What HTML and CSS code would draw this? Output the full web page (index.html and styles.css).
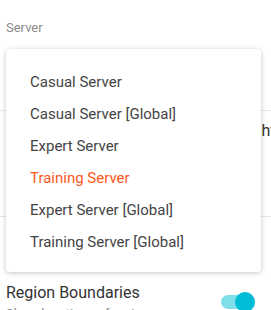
FILE: index.html
```html
<!DOCTYPE html>
<html lang="en">
<head>
    <meta charset="UTF-8">
    <meta name="viewport" content="width=device-width, initial-scale=1.0">
    <title>Server</title>
    <link rel="stylesheet" href="styles.css">
</head>
<body>
    <div class="page">
        <!-- Campo do servidor -->
        <div class="field">
            <div class="field-label">Server</div>
        </div>

        <div class="setting">
            <span class="setting-hidden">Daylight</span>
        </div>

        <div class="setting-row">
            <div class="setting-text">
                <div class="setting-title">Region Boundaries</div>
                <div class="setting-desc">Show locations of regions</div>
            </div>
            <div class="toggle">
                <span class="toggle-thumb"></span>
            </div>
        </div>
    </div>

    <!-- Menu aberto -->
    <ul class="menu">
        <li>Casual Server</li>
        <li>Casual Server [Global]</li>
        <li>Expert Server</li>
        <li class="selected">Training Server</li>
        <li>Expert Server [Global]</li>
        <li>Training Server [Global]</li>
    </ul>
</body>
</html>
```

FILE: styles.css
```css
/* Corpo */
body {
    margin: 0;
    font-family: Roboto, "Noto Sans", sans-serif;
    background-color: #fff;
    color: #333;
    overflow: hidden;
    width: 271px;
    height: 310px;
    position: relative;
}

/* Campo do servidor */
.field {
    height: 110px;
    border-bottom: 1px solid #e6e6e6;
}

.field-label {
    padding: 20px 0 0 6px;
    font-size: 13px;
    line-height: 16px;
    color: #8a8a8a;
}

/* Linha escondida atrás do menu */
.setting {
    height: 95px;
    padding-top: 10px;
    border-bottom: 1px solid #e6e6e6;
    white-space: nowrap;
}

.setting-hidden {
    display: inline-block;
    padding-left: 218px;
    font-size: 16px;
    line-height: 19px;
    color: #333;
}

/* Linha com toggle */
.setting-row {
    display: flex;
    justify-content: space-between;
    align-items: flex-start;
    padding: 66px 16px 0 6px;
}

.setting-title {
    font-size: 16px;
    line-height: 19px;
    color: #333;
}

.setting-desc {
    font-size: 13px;
    line-height: 16px;
    color: #888;
    margin-top: 4px;
}

.toggle {
    position: relative;
    width: 34px;
    height: 14px;
    margin-top: 12px;
    border-radius: 7px;
    background-color: #80deea;
}

.toggle-thumb {
    position: absolute;
    right: 0;
    top: -3px;
    width: 20px;
    height: 20px;
    border-radius: 50%;
    background-color: #00bcd4;
}

/* Menu */
.menu {
    position: absolute;
    top: 49px;
    left: 6px;
    width: 255px;
    margin: 0;
    padding: 17px 0 14px;
    list-style: none;
    background-color: #fff;
    border-radius: 4px;
    box-shadow: 0 1px 6px rgba(0, 0, 0, 0.12), 0 1px 4px rgba(0, 0, 0, 0.12);
}

.menu li {
    height: 32px;
    line-height: 32px;
    padding-left: 24px;
    font-size: 15px;
    color: #444;
}

.menu li.selected {
    color: #ff5722;
}
```
